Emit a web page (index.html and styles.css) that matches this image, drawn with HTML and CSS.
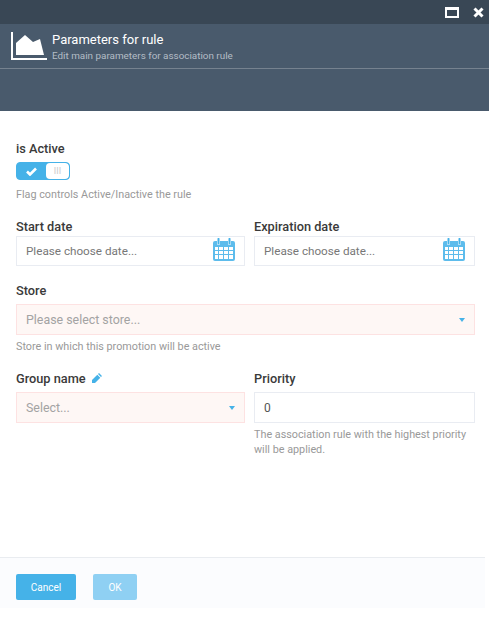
FILE: index.html
```html
<!DOCTYPE html>
<html lang="en">
<head>
  <meta charset="UTF-8">
  <meta name="viewport" content="width=device-width, initial-scale=1.0">
  <title>Parameters for rule</title>
  <link rel="stylesheet" href="styles.css">
</head>
<body>
  <div class="top-bar">
    <svg class="win-icon" width="14" height="11" viewBox="0 0 14 11"><path fill="#fff" fill-rule="evenodd" d="M0 0h14v11H0zM2 3v6h10V3z"/></svg>
    <svg class="win-icon close" width="11" height="11" viewBox="0 0 11 11"><path fill="none" stroke="#fff" stroke-width="3" d="M1.5 1.5l8 8M9.5 1.5l-8 8"/></svg>
  </div>

  <div class="header">
    <div class="header-title">
      <svg width="37" height="28" viewBox="0 0 37 28"><path fill="#fff" d="M0 0h2v26h34v2H0z"/><path fill="#fff" d="M5 23V11l9-8 8 7 7-3 4 16z"/></svg>
      <div>
        <div class="title">Parameters for rule</div>
        <div class="subtitle">Edit main parameters for association rule</div>
      </div>
    </div>
  </div>

  <div class="content">
    <div class="label">is Active</div>
    <div class="toggle">
      <div class="toggle-on">
        <svg width="11" height="9" viewBox="0 0 11 9"><path fill="none" stroke="#fff" stroke-width="2.6" d="M1 4.5l3 3 6-6"/></svg>
      </div>
      <div class="toggle-handle">III</div>
    </div>
    <div class="help">Flag controls Active/Inactive the rule</div>

    <div class="row row-dates">
      <div class="col">
        <div class="label">Start date</div>
        <div class="field">
          <span class="placeholder">Please choose date...</span>
          <svg class="calendar" width="22" height="23" viewBox="0 0 22 23"><use href="#cal"/></svg>
        </div>
      </div>
      <div class="col">
        <div class="label">Expiration date</div>
        <div class="field">
          <span class="placeholder">Please choose date...</span>
          <svg class="calendar" width="22" height="23" viewBox="0 0 22 23"><use href="#cal"/></svg>
        </div>
      </div>
    </div>

    <div class="row-store">
      <div class="label">Store</div>
      <div class="field field-error">
        <span class="placeholder light">Please select store...</span>
        <span class="caret"></span>
      </div>
      <div class="help help-tight">Store in which this promotion will be active</div>
    </div>

    <div class="row row-group">
      <div class="col">
        <div class="label">Group name
          <svg class="pencil" width="10" height="10" viewBox="0 0 10 10"><path fill="#45b2e8" d="M7 0l3 3-1 1-3-3zM5.300 1.700l3 3L3 10H0V7z"/></svg>
        </div>
        <div class="field field-error">
          <span class="placeholder light">Select...</span>
          <span class="caret"></span>
        </div>
      </div>
      <div class="col">
        <div class="label">Priority</div>
        <div class="field"><span class="value">0</span></div>
        <div class="help help-tight">The association rule with the highest priority will be applied.</div>
      </div>
    </div>
  </div>

  <div class="footer">
    <button class="btn btn-cancel">Cancel</button>
    <button class="btn btn-ok">OK</button>
  </div>

  <svg width="0" height="0" class="defs">
    <symbol id="cal" viewBox="0 0 22 23">
      <path fill="#5dbcec" fill-rule="evenodd" d="M2 3h2v2.500a1.500 1.500 0 0 0 3 0V3h8v2.500a1.500 1.500 0 0 0 3 0V3h2a2 2 0 0 1 2 2v16a2 2 0 0 1-2 2H2a2 2 0 0 1-2-2V5a2 2 0 0 1 2-2zM2 9v3h3V9zm4 0v3h4V9zm5 0v3h4V9zm5 0v3h4V9zM2 13v3h3v-3zm4 0v3h4v-3zm5 0v3h4v-3zm5 0v3h4v-3zM2 17v4h3v-4zm4 0v4h4v-4zm5 0v4h4v-4zm5 0v4h4v-4z"/>
      <path fill="#45b2e8" d="M5 0h1a.500.500 0 0 1 .500.500v5a1 1 0 0 1-2 0v-5A.500.500 0 0 1 5 0zM16 0h1a.500.500 0 0 1 .500.500v5a1 1 0 0 1-2 0v-5A.500.500 0 0 1 16 0z"/>
    </symbol>
  </svg>
</body>
</html>
```

FILE: styles.css
```css
body {
  margin: 0;
  font-family: Roboto, "Liberation Sans", sans-serif;
  background-color: #fff;
  color: #333;
}
.defs {
  display: block;
}
.top-bar {
  height: 24px;
  display: flex;
  align-items: center;
  justify-content: flex-end;
  gap: 14px;
  padding-right: 5px;
  background-color: #394755;
}
.win-icon {
  display: block;
}
.header {
  height: 87px;
  box-sizing: border-box;
  background-color: #495a6c;
}
.header-title {
  height: 45px;
  box-sizing: border-box;
  padding: 8px 0 0 11px;
  display: flex;
  gap: 4px;
  border-bottom: 1px solid #76828f;
}
.title {
  font-size: 13px;
  line-height: 16px;
  font-weight: 400;
  color: #fff;
}
.subtitle {
  font-size: 9.9px;
  line-height: 14px;
  margin-top: 1px;
  color: #b4bdc6;
}
.content {
  padding: 31px 14px 0 16px;
}
.label {
  font-size: 12.75px;
  line-height: 14px;
  font-weight: 500;
  color: #3a3a3a;
}
.toggle {
  display: flex;
  width: 54px;
  height: 18px;
  margin-top: 6px;
  box-sizing: border-box;
  border: 1px solid #45b2e8;
  border-radius: 4px;
  overflow: hidden;
  background-color: #45b2e8;
}
.toggle-on {
  width: 29px;
  display: flex;
  align-items: center;
  justify-content: center;
}
.toggle-handle {
  flex: 1;
  font-size: 9px;
  line-height: 16px;
  text-align: center;
  color: #ccc;
  background-color: #fff;
  border-radius: 4px;
}
.help {
  font-size: 10.8px;
  line-height: 15px;
  margin-top: 7px;
  color: #999;
}
.help-tight {
  margin-top: 4px;
}
.row {
  display: flex;
  gap: 9px;
}
.row-dates {
  margin-top: 18px;
}
.row-store {
  margin-top: 18px;
}
.row-store .field {
  margin-top: 6px;
}
.row-group {
  margin-top: 18px;
}
.row-group .field {
  margin-top: 6px;
}
.col {
  flex: 1;
  min-width: 0;
}
.col:last-child {
  flex: 0 0 221px;
}
.field {
  display: flex;
  align-items: center;
  justify-content: space-between;
  height: 31px;
  box-sizing: border-box;
  margin-top: 2px;
  padding: 0 9px;
  border: 1px solid #e9ecf2;
  background-color: #fff;
  font-size: 12px;
}
.row-dates .field {
  height: 30px;
}
.row-dates .placeholder {
  font-size: 11.7px;
}
.field-error {
  border-color: #fde2e2;
  background-color: #fef7f5;
}
.placeholder {
  color: #777;
}
.placeholder.light {
  font-size: 12.4px;
  color: #a3a3a3;
}
.value {
  color: #555;
}
.calendar {
  display: block;
  margin-bottom: 4px;
}
.caret {
  width: 0;
  height: 0;
  border-left: 3px solid transparent;
  border-right: 3px solid transparent;
  border-top: 4px solid #45b2e8;
}
.pencil {
  margin-left: 3px;
}
.footer {
  margin-top: 100px;
  width: 485px;
  height: 51px;
  box-sizing: border-box;
  padding-top: 16px;
  display: flex;
  align-items: flex-start;
  gap: 17px;
  padding-left: 16px;
  border-top: 1px solid #e9ecf0;
  background-color: #fbfcfe;
}
.btn {
  height: 26px;
  padding: 0;
  border: none;
  border-radius: 2px;
  font-family: inherit;
  font-size: 10px;
  font-weight: 400;
  color: #fff;
  background-color: #45b2e8;
}
.btn-cancel {
  width: 60px;
}
.btn-ok {
  width: 44px;
  background-color: #8fd0f3;
}
```
